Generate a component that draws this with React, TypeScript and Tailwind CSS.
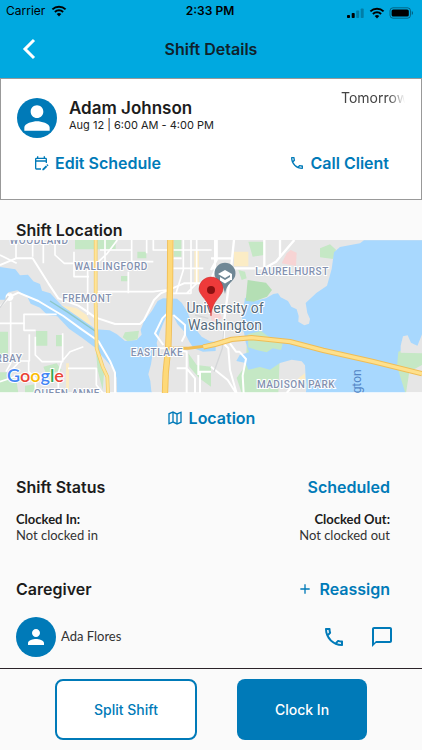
import {
  MdAdd,
  MdChatBubbleOutline,
  MdOutlineEditCalendar,
  MdOutlinePhone,
  MdPerson,
} from "react-icons/md";
import { RiMap2Line } from "react-icons/ri";

function WifiIcon() {
  return (
    <svg viewBox="0 0 16 12" className="h-3 w-4" aria-hidden="true">
      <g fill="none" stroke="currentColor" strokeWidth="1.9">
        <path d="M1.4 4.4a9.4 9.4 0 0 1 13.2 0" />
        <path d="M3.9 7a5.8 5.8 0 0 1 8.2 0" />
      </g>
      <path d="M8 11.6 5.7 9.1a3.3 3.3 0 0 1 4.6 0Z" fill="currentColor" />
    </svg>
  );
}

function StatusBar() {
  return (
    <div className="grid h-[22px] grid-cols-3 items-center pr-2 pl-1.5 text-black">
      <div className="flex items-center gap-1.5 text-xs">
        <span>Carrier</span>
        <WifiIcon />
      </div>
      <span className="text-center text-xs font-semibold">2:33 PM</span>
      <div className="flex items-center justify-end gap-1 pt-1">
        <svg viewBox="0 0 18 12" className="h-3 w-[18px]" aria-hidden="true">
          <rect x="0" y="8" width="3" height="3" rx="0.8" />
          <rect x="4.7" y="6" width="3" height="5" rx="0.8" />
          <rect x="9.2" y="3.5" width="3" height="7.5" rx="0.8" opacity="0.25" />
          <rect x="13.7" y="1.5" width="3" height="9.5" rx="0.8" opacity="0.25" />
        </svg>
        <WifiIcon />
        <svg viewBox="0 0 25 12" className="h-3 w-[25px]" aria-hidden="true">
          <rect x="1" y="0.8" width="20.5" height="10.4" rx="3" fill="none" stroke="#000" opacity="0.4" />
          <rect x="2.6" y="2.4" width="17.2" height="7.2" rx="1.6" />
          <path d="M22.8 4v4c1.6-.6 1.6-3.4 0-4Z" opacity="0.45" />
        </svg>
      </div>
    </div>
  );
}

function Header() {
  return (
    <header className="bg-[#00a9e0]">
      <StatusBar />
      <div className="grid h-14 grid-cols-[58px_1fr_58px] items-center pb-0.5">
        <button type="button" aria-label="Back" className="flex h-full items-center justify-center text-white">
          <svg viewBox="0 0 14 22" className="h-[22px] w-3.5" fill="none" stroke="currentColor" strokeWidth="3" aria-hidden="true">
            <path d="M12 2 3 11l9 9" />
          </svg>
        </button>
        <h1 className="text-center text-base font-semibold text-[#10222b]">Shift Details</h1>
      </div>
    </header>
  );
}

function ClientCard() {
  return (
    <section className="border border-[#999] bg-white pt-2 pr-4 pb-6 pl-4">
      <div className="flex">
        <div className="mt-[11px] flex size-10 shrink-0 items-center justify-center rounded-full bg-[#007ab8]">
          <MdPerson className="size-[38px] text-white" />
        </div>
        <div className="mt-[11px] ml-3 min-w-0 flex-1">
          <h2 className="text-[17px] leading-5 font-semibold">Adam Johnson</h2>
          <p className="text-[11px] leading-[14px] text-[#222]">Aug 12 | 6:00 AM - 4:00 PM</p>
        </div>
        <p className="mt-px h-5 w-16 shrink-0 overflow-hidden mask-r-from-75% mask-r-to-100% text-sm whitespace-nowrap text-[#444]">
          Tomorrow
        </p>
      </div>
      <div className="mt-[13px] flex items-center justify-between pr-4 pl-4 text-base leading-6 font-semibold text-[#007ab8]">
        <button type="button" className="flex items-center gap-1.5">
          <MdOutlineEditCalendar className="size-4" />
          Edit Schedule
        </button>
        <button type="button" className="flex items-center gap-1.5">
          <MdOutlinePhone className="size-4" />
          Call Client
        </button>
      </div>
    </section>
  );
}

function ShiftMap() {
  return (
    <svg
      viewBox="0 0 422 153"
      preserveAspectRatio="xMidYMid slice"
      className="block h-[153px] w-full"
      role="img"
      aria-label="Map of the shift location"
    >
      <rect width="422" height="153" fill="#e6e6e6" />
      <g transform="translate(0 -25) scale(.33333)">
        {/* parks */}
        <g fill="#c5e8c5">
          <path d="M225 75h122v28H225ZM412 110h27v20h-27ZM363 183h20v16h-20ZM108 348h34v44h-34ZM168 360h20v34h-20ZM0 350h24v74H0Z" />
          <path d="M0 472h22l28 28 5 34H0ZM75 512l30-4v26H75ZM130 455l40-10 15 20-45 15ZM288 410l25 55-5 60-15-60Z" />
          <path d="M522 75h22v50h-22ZM565 415l25 35 43 5v60l-35-25-30-35ZM745 80h48v40l-35 5Z" />
          <path d="M960 100l30-12 18 16-8 28-40-5Z" />
          <path d="M740 390l60-30 30 20 10 25-5 129H725l-15-45 28-40Z" />
          <path d="M715 165l20 5 5 20-15 5Z" />
        </g>
        <g fill="#fbecc5">
          <path d="M702 110h43v44h-43ZM583 108h14v100h-14ZM198 445h9v80h-9ZM180 270l50 10 30 20 15 30-40-15ZM895 490l20-15v35h-20Z" />
        </g>
        <path d="M845 145l15-30 12-10 18 8-2 40ZM628 290l30 0 8 20-30 10Z" fill="#f7d4d4" />

        {/* water */}
        <g fill="#a8d8fe">
          <path d="M0 156l46 7 14 18 24-2 16 20 20 8 6 20 25 8 35 37 48 33 53 38 42 3 22 12 24 20 35-3 15-16-3-15 10-25 24-32 17-29 16-8 42 1 14 12 18 29 12 35 30 38 24 14 18 1v28l-38 2-28-10-13-20-15-30-20-22-15-28-14-6-14 30-12 30-8 30 3 14-15 18-5 32-8 30 6 20 3 31 18 27v13H352l-2-80-8-26-38-42-17-22-40-30-40-28-35-37-30-4-22-22-28-12-10-20-30-20-27 6-10 22H0Z" />
          <path d="M735 248l28 10 35-8 22-13 14-2 8 12 22 11 10 17 16 8 6 20-1 17 18 11 14-5 3-14-8-18-5-30 32-30 32-22 14-50 7-50 18-16 60-11 12-9h204v288l-12-1-14-15-8 20-10 25 2 60-2 108H915l5-50-3-24-2-36-10-12-30-5-35 10-30 20-30-8-35 8-8-20-28-6 10-18 28-8-10-30-5-30-10-12Z" />
        </g>
        <path d="M743 195l55 8 18 22-15 20-40 15-24-3Z" fill="#b4dfb4" />
        <path d="M743 358l40-10 20 15 25 12 20 12-5 18-25-5-18 12-30-7-25-8Z" fill="#c5e8c5" />
        <path d="M375 352l42-5-4 26-30 6-15-12ZM1195 410l25-10 46 0v134h-50l-25-80Z" fill="#c5e8c5" />
        <path d="M1202 392l7-28 14-3 10 22 33 16v16l-64-2ZM1228 470l38-20v84h-48Z" fill="#e6e6e6" />
        <path d="M150 258l55 35 80 55" fill="none" stroke="#8bc7c5" strokeWidth="4" />

        {/* streets */}
        <g fill="none" stroke="#fff" strokeLinejoin="round">
          <path strokeWidth="6" d="M0 150L48 130H98L145 205l30 45 60 22 30 20 20 15 60 20h75l12-12 30-60 20-20 70-30h75l18-40V75" />
          <path strokeWidth="6" d="M0 275l30-30 25-12 60 25 75 45 55 40 50 35 35 60 15 35v75" />
          <path strokeWidth="5" d="M165 75v45l28 25h28M98 125V80M48 75v55M0 120l50 25M32 260v185l-14 25M0 325h75M170 298H72v48h35M88 358v80H60L30 470M106 365v55l20 20h62v-85M86 440v30l20 20v44M250 395l-40 15-25 30-10 35v59M204 460h85v50l20 24M0 500l60-20 30 20M222 110v75h45M263 150v150M130 75v70M263 140h20M315 75v82M290 145l32-30 30-40" />
          <path strokeWidth="5" d="M290 230h170l40-5M385 170v65M300 105h95v35h65M460 75v30h40M395 75v40M440 75v40M500 105h135M550 75v90l-22 70 45 0V75M520 160h90M520 235h40l30-30V75M520 130h25" />
          <path strokeWidth="7" d="M633 160h160l35-20 55-65M650 75v60l-17 30M702 75l-10 95-12 90-8 60-2 66M793 75v80M840 75v50M633 130h65" />
          <path strokeWidth="6" d="M670 385l15 15 5 65 20 70M690 385l18 25 10 0 20 22-10 50 3 52M633 455l50 40 25 39M595 420v60M480 400h25l55 10v124M490 390l-25-35 22-45 20-20M520 300l35 30v30l-10 20M530 460h30l25 30v44M600 534V470l33 0M860 534l25-30" />
          <path strokeWidth="5" d="M0 534h1266" />
        </g>
        <path d="M28 238a8 8 0 1 0 1 0" fill="#fff" stroke="#fff" strokeWidth="8" />
        <g fill="none" stroke="#d4d6d8" strokeWidth="4">
          <path d="M0 278l25-35M672 320l-5 80-25 70M625 310l-40-10" />
        </g>

        {/* highways */}
        <g fill="none" strokeLinejoin="round">
          <path stroke="#f4c95f" strokeWidth="11" d="M287 75v200l3 125 18 55 14 30 2 49" />
          <path stroke="#fee49a" strokeWidth="7" d="M287 75v200l3 125 18 55 14 30 2 49" />
          <path stroke="#f0bd55" strokeWidth="19" d="M511 75l-1 140-5 180-8 80-2 59" />
          <path stroke="#fed979" strokeWidth="14" d="M511 75l-1 140-5 180-8 80-2 59" />
          <path stroke="#f0bd55" strokeWidth="9" d="M505 400h60l60-8" />
          <path stroke="#f0bd55" strokeWidth="16" d="M610 396l35-8 50-15 60-5 115 12 100 26 150 34 146 36" />
          <path stroke="#fee08c" strokeWidth="10" d="M610 396l35-8 50-15 60-5 115 12 100 26 150 34 146 36" />
        </g>
      </g>

      <g
        fill="#8391b0"
        stroke="#fff"
        strokeWidth="2"
        paintOrder="stroke"
        textAnchor="middle"
        className="font-[Roboto,sans-serif] text-[10px] font-medium tracking-wider"
      >
        <text x="39" y="4">WOODLAND</text>
        <text x="111" y="30">WALLINGFORD</text>
        <text x="87" y="62">FREMONT</text>
        <text x="157" y="116">EASTLAKE</text>
        <text x="9" y="122">RBAY</text>
        <text x="67" y="157">QUEEN ANNE</text>
        <text x="292" y="35">LAURELHURST</text>
        <text x="296" y="148">MADISON PARK</text>
      </g>
      <text transform="translate(361 160) rotate(-90)" fill="#5385c5" className="font-[Roboto,sans-serif] text-xs">
        ngton
      </text>

      {/* university marker */}
      <path d="M225 54c-1-7-4-10-7-13a10.500 10.500 0 1 1 14 0c-4 4-6 7-7 13Z" fill="#6f8795" />
      <path d="m225 30-7 4 7 4 5-3v5h2v-6ZM220 37v3.500l5 3 5-3V37l-5 3Z" fill="#fff" />

      <g
        fill="#556b7c"
        stroke="#fff"
        strokeWidth="2"
        paintOrder="stroke"
        textAnchor="middle"
        className="font-[Roboto,sans-serif] text-sm"
      >
        <text x="225" y="73">University of</text>
        <text x="225" y="90">Washington</text>
      </g>

      {/* shift pin */}
      <path
        d="M211 76c-1-10-4-14-8-19-2-3-4-5-4-8a12 12 0 0 1 24 0c0 3-2 5-4 8-4 5-7 9-8 19Z"
        fill="#ee3a3a"
        stroke="#c92a2a"
        strokeWidth="0.500"
      />
      <circle cx="211" cy="50" r="4" fill="#8b1010" />

      <text
        x="7"
        y="142"
        stroke="#fff"
        strokeWidth="2"
        paintOrder="stroke"
        className="font-[Lato,sans-serif] text-lg font-semibold"
      >
        <tspan fill="#4285f4">G</tspan>
        <tspan fill="#ea4335">o</tspan>
        <tspan fill="#fbbc05">o</tspan>
        <tspan fill="#4285f4">g</tspan>
        <tspan fill="#34a853">l</tspan>
        <tspan fill="#ea4335">e</tspan>
      </text>
    </svg>
  );
}

function ShiftStatus() {
  return (
    <section className="mt-[45px] px-4">
      <div className="flex items-center justify-between pr-4 leading-6 font-semibold">
        <h2>Shift Status</h2>
        <span className="text-[#007ab8]">Scheduled</span>
      </div>
      <dl className="mt-3 flex justify-between pr-4 font-[Lato,sans-serif] text-[13px] leading-4">
        <div>
          <dt className="font-bold">Clocked In:</dt>
          <dd className="text-[#333]">Not clocked in</dd>
        </div>
        <div className="text-right">
          <dt className="font-bold">Clocked Out:</dt>
          <dd className="text-[#333]">Not clocked out</dd>
        </div>
      </dl>
    </section>
  );
}

function Caregiver() {
  return (
    <section className="mt-[34px] px-4">
      <div className="flex items-center justify-between pr-4 leading-6 font-semibold">
        <h2>Caregiver</h2>
        <button type="button" className="flex items-center gap-1.5 text-[#007ab8]">
          <MdAdd className="size-4" />
          Reassign
        </button>
      </div>
      <div className="mt-4 flex items-center pr-3">
        <div className="flex size-10 items-center justify-center rounded-full bg-[#007ab8]">
          <MdPerson className="size-6 text-white" />
        </div>
        <span className="ml-[5px] flex-1 font-[Lato,sans-serif] text-[13px] text-[#333]">Ada Flores</span>
        <div className="flex items-center gap-6 text-[#007ab8]">
          <button type="button" aria-label="Call Ada Flores">
            <MdOutlinePhone className="size-6" />
          </button>
          <button type="button" aria-label="Message Ada Flores">
            <MdChatBubbleOutline className="size-6" />
          </button>
        </div>
      </div>
    </section>
  );
}

function App() {
  return (
    <div className="flex min-h-screen flex-col bg-[#fafafa] font-[Inter,sans-serif] text-[#1c1c1c]">
      <Header />
      <main className="flex-1 pb-2.5">
        <ClientCard />
        <h2 className="mt-5 px-4 leading-5 font-semibold">Shift Location</h2>
        <ShiftMap />
        <div className="mt-[13px] flex justify-center">
          <button type="button" className="flex items-center gap-1.5 leading-6 font-semibold text-[#007ab8]">
            <RiMap2Line className="size-4" />
            Location
          </button>
        </div>
        <ShiftStatus />
        <Caregiver />
      </main>
      <footer className="flex justify-center gap-10 border-t border-[#2b2329] pt-2.5 pb-2.5 text-sm font-medium">
        <button type="button" className="h-[61px] w-[142px] rounded-lg border-2 border-[#007ab8] bg-white text-[#007ab8]">
          Split Shift
        </button>
        <button type="button" className="h-[61px] w-[130px] rounded-lg bg-[#007ab8] text-white">
          Clock In
        </button>
      </footer>
    </div>
  );
}

export default App;
